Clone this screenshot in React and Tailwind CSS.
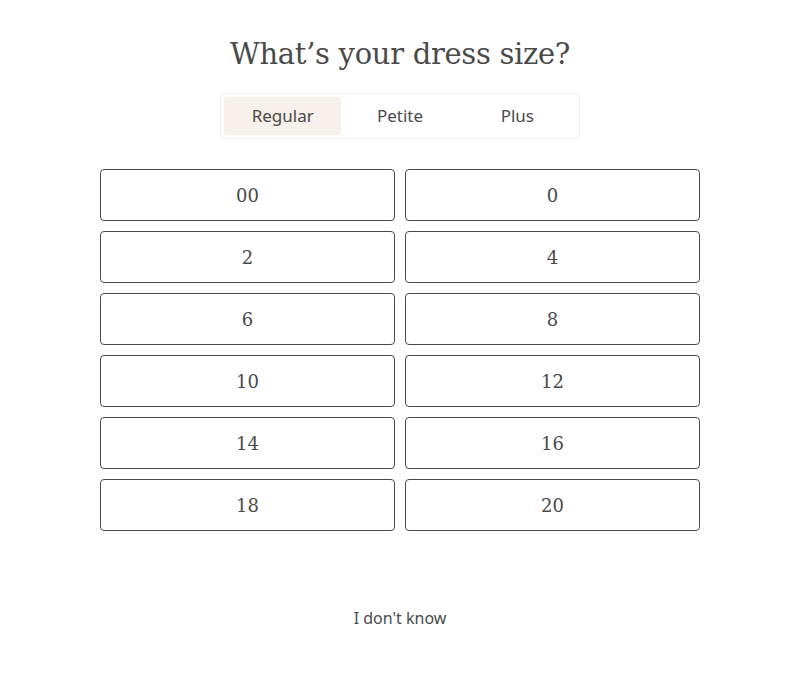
const SIZES = ['00', '0', '2', '4', '6', '8', '10', '12', '14', '16', '18', '20'];
const TABS = ['Regular', 'Petite', 'Plus'];

export default function App() {
  return (
    <div className="min-h-[677px] bg-white flex flex-col items-center text-[#4a4a4a]">
      <h1 className="mt-[32px] text-[29px] leading-[44px] font-['DejaVu_Serif',serif] tracking-[-0.3px]">
        What’s your dress size?
      </h1>
      <div className="mt-[17px] w-[360px] h-[46px] p-[3px] border border-[#f4ede8] rounded flex">
        {TABS.map((t, i) => (
          <button
            key={t}
            className={
              'flex-1 rounded-[3px] text-[17px] font-["Noto_Sans",sans-serif] ' +
              (i === 0 ? 'bg-[#f8f0eb]' : '')
            }
          >
            {t}
          </button>
        ))}
      </div>
      <div className="mt-[30px] w-[600px] grid grid-cols-2 gap-[10px]">
        {SIZES.map((s) => (
          <button
            key={s}
            className="h-[52px] border border-[#4a4a4a] rounded-[4px] text-[18px] font-['DejaVu_Serif',serif]"
          >
            {s}
          </button>
        ))}
      </div>
      <button className="mt-[75px] text-[16px] font-['Noto_Sans',sans-serif]">I don't know</button>
    </div>
  );
}
